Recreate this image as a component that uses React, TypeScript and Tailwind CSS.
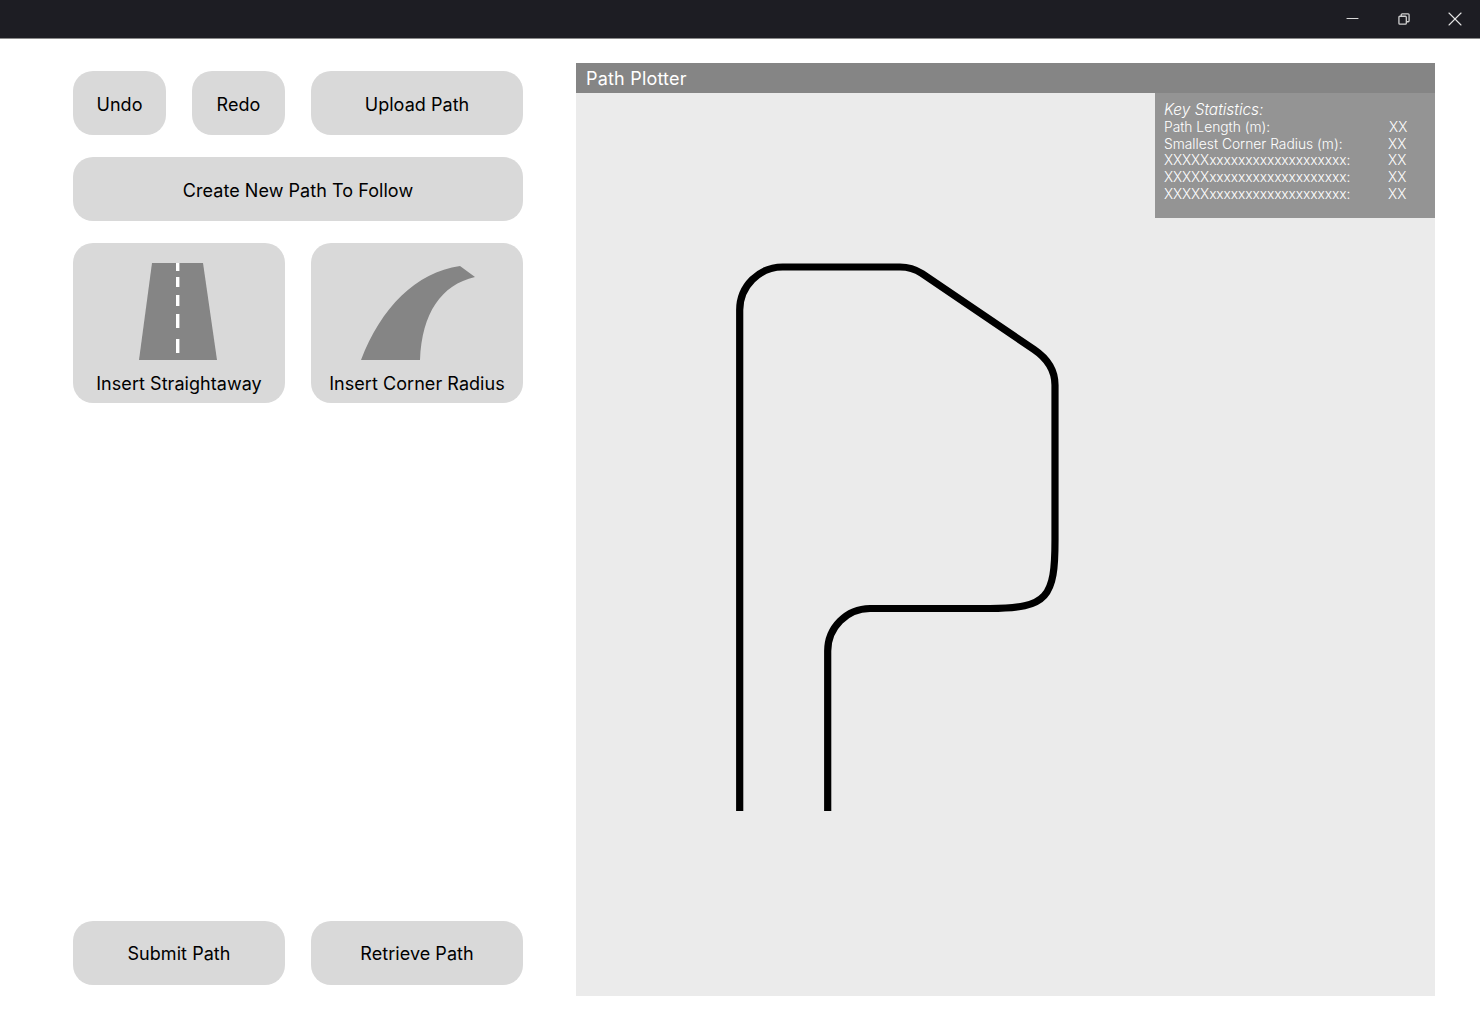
import { Minus, X } from "lucide-react";

const stats = [
  { label: "Path Length (m):", labelClass: "", nudge: "pl-[1px]" },
  { label: "Smallest Corner Radius (m):", labelClass: "", nudge: "" },
  { label: "XXXXXxxxxxxxxxxxxxxxxxxx:", labelClass: "tracking-[-0.1px]", nudge: "" },
  { label: "XXXXXxxxxxxxxxxxxxxxxxxx:", labelClass: "tracking-[-0.1px]", nudge: "" },
  { label: "XXXXXxxxxxxxxxxxxxxxxxxx:", labelClass: "tracking-[-0.1px]", nudge: "" },
];

function Btn({ children, className = "" }: { children: React.ReactNode; className?: string }) {
  return (
    <button className={`h-16 rounded-[20px] bg-[#d9d9d9] text-[18px] tracking-[0.05px] text-black flex items-center justify-center ${className}`}>
      {children}
    </button>
  );
}

function RoadIcon() {
  return (
    <svg className="-translate-x-[1px]" width="78" height="97" viewBox="0 0 78 97">
      <path d="M13 0H64L78 97H0Z" fill="#858585" />
      <g fill="#fff">
        <rect x="37" y="0" width="3.4" height="8" />
        <rect x="37" y="14" width="3.4" height="10" />
        <rect x="37" y="32" width="3.4" height="11" />
        <rect x="37" y="51" width="3.4" height="14" />
        <rect x="37" y="76" width="3.4" height="14" />
      </g>
    </svg>
  );
}

function CornerIcon() {
  return (
    <svg className="translate-x-[1px]" width="114" height="97" viewBox="0 0 114 97">
      <path d="M0 97C20 45 55 9 99 3L114 14C80 22 61 50 59 97Z" fill="#858585" />
    </svg>
  );
}

export default function App() {
  return (
    <div className="h-[1032px] w-[1480px] bg-white flex flex-col font-['Inter',sans-serif] overflow-hidden">
      {/* Window title bar */}
      <div className="h-[39px] shrink-0 bg-[#1d1d23] border-b border-[#8a8a8a] flex items-center justify-end text-[#e4e4e4]">
        <div className="w-[51px] flex justify-center -translate-x-[1px]">
          <Minus className="w-[19px] h-[19px] -translate-y-[1px]" strokeWidth={1.2} />
        </div>
        <div className="w-[51px] flex justify-center -translate-x-[1px]">
          <svg width="12" height="12" viewBox="0 0 13 13" fill="none" stroke="#d0d0d0" strokeWidth="1.4">
            <rect x="1" y="3.5" width="8" height="8.5" rx="1" />
            <path d="M3.5 3.5V2a1 1 0 0 1 1-1H11a1 1 0 0 1 1 1v6.5a1 1 0 0 1-1 1H9" />
          </svg>
        </div>
        <div className="w-[50px] flex justify-center">
          <X className="w-6 h-6" strokeWidth={1.1} />
        </div>
      </div>

      <div className="flex-1 flex">
        {/* Left controls */}
        <div className="w-[576px] pl-[73px] pr-[53px] pt-8 pb-[47px] flex flex-col justify-between">
          <div className="flex flex-col gap-[22px]">
            <div className="flex gap-[26px]">
              <Btn className="w-[93px] pt-[2px]">Undo</Btn>
              <Btn className="w-[93px] pt-[2px]">Redo</Btn>
              <Btn className="w-[212px] pt-[2px]">Upload Path</Btn>
            </div>
            <Btn className="w-full pt-[2px]">Create New Path To Follow</Btn>
            <div className="flex gap-[26px]">
              <button className="w-[212px] h-40 rounded-[20px] bg-[#d9d9d9] flex flex-col items-center pt-5 text-[18px] tracking-[0.05px] text-black">
                <RoadIcon />
                <span className="mt-[11px] leading-[26px]">Insert Straightaway</span>
              </button>
              <button className="w-[212px] h-40 rounded-[20px] bg-[#d9d9d9] flex flex-col items-center pt-5 text-[18px] tracking-[0.05px] text-black">
                <CornerIcon />
                <span className="mt-[11px] leading-[26px]">Insert Corner Radius</span>
              </button>
            </div>
          </div>
          <div className="flex gap-[26px]">
            <Btn className="w-[212px]">Submit Path</Btn>
            <Btn className="w-[212px]">Retrieve Path</Btn>
          </div>
        </div>

        {/* Plotter */}
        <div className="w-[859px] mt-6 mb-9 flex flex-col">
          <div className="h-[30px] bg-[#858585] text-white text-[18px] tracking-[0.2px] leading-[32px] pl-[10px]">Path Plotter</div>
          <div className="relative flex-1 bg-[#ebebeb]">
            <svg className="absolute left-0 top-0" width="859" height="903" viewBox="576 93 859 903" fill="none">
              <path
                d="M739.7 811V310A43 43 0 0 1 782.7 267H900C908 267 915 269 922 273.5L1034 349.5C1048 359 1055 370 1055 385V540C1055 597 1048 608.5 990 608.5H870A42.5 42.5 0 0 0 827.7 651V811"
                stroke="#000"
                strokeWidth="7.2"
              />
            </svg>
            <div className="absolute right-0 top-0 w-[280px] h-[125px] bg-[#949494] text-white text-[13.8px] font-light leading-[16.7px] pl-[9px] pt-[9.3px]">
              <div className="italic text-[15.4px]">Key Statistics:</div>
              {stats.map((row, i) => (
                <div key={i} className="flex">
                  <span className={`w-[224px] whitespace-nowrap ${row.labelClass}`}>{row.label}</span>
                  <span className={row.nudge}>XX</span>
                </div>
              ))}
            </div>
          </div>
        </div>
      </div>
    </div>
  );
}
